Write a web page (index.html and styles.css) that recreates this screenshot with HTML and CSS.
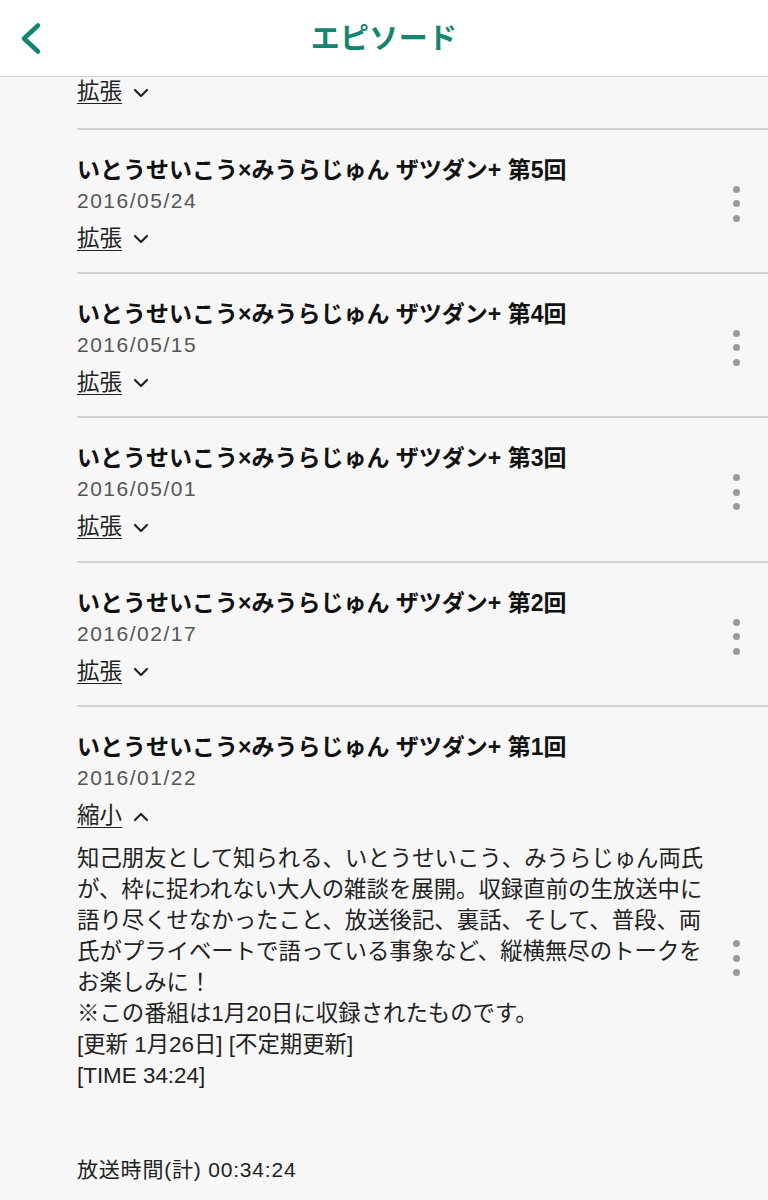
FILE: index.html
```html
<!DOCTYPE html>
<html lang="ja">
<head>
<meta charset="utf-8">
<title>エピソード</title>
<link rel="stylesheet" href="styles.css">
</head>
<body>
<header class="topbar">
  <svg class="back" width="24" height="34" viewBox="0 0 24 34"><path d="M18 3.5 L4 16.5 L18 29.5" fill="none" stroke="#138572" stroke-width="4.5" stroke-linecap="round" stroke-linejoin="round"/></svg>
  <h1 class="title">エピソード</h1>
</header>
<main class="list">
  <section class="item partial">
    <div class="content">
      <div class="toggle"><span class="tlabel">拡張</span><svg class="chev" width="16" height="10" viewBox="0 0 16 10"><path d="M2 2 L8 8 L14 2" fill="none" stroke="#222" stroke-width="2.2" stroke-linecap="round" stroke-linejoin="round"/></svg></div>
    </div>
  </section>
  <section class="item">
    <div class="content">
      <div class="ep-title">いとうせいこう×みうらじゅん ザツダン+ 第5回</div>
      <div class="date">2016/05/24</div>
      <div class="toggle"><span class="tlabel">拡張</span><svg class="chev" width="16" height="10" viewBox="0 0 16 10"><path d="M2 2 L8 8 L14 2" fill="none" stroke="#222" stroke-width="2.2" stroke-linecap="round" stroke-linejoin="round"/></svg></div>
    </div>
    <div class="more"><span></span><span></span><span></span></div>
  </section>
  <section class="item">
    <div class="content">
      <div class="ep-title">いとうせいこう×みうらじゅん ザツダン+ 第4回</div>
      <div class="date">2016/05/15</div>
      <div class="toggle"><span class="tlabel">拡張</span><svg class="chev" width="16" height="10" viewBox="0 0 16 10"><path d="M2 2 L8 8 L14 2" fill="none" stroke="#222" stroke-width="2.2" stroke-linecap="round" stroke-linejoin="round"/></svg></div>
    </div>
    <div class="more"><span></span><span></span><span></span></div>
  </section>
  <section class="item">
    <div class="content">
      <div class="ep-title">いとうせいこう×みうらじゅん ザツダン+ 第3回</div>
      <div class="date">2016/05/01</div>
      <div class="toggle"><span class="tlabel">拡張</span><svg class="chev" width="16" height="10" viewBox="0 0 16 10"><path d="M2 2 L8 8 L14 2" fill="none" stroke="#222" stroke-width="2.2" stroke-linecap="round" stroke-linejoin="round"/></svg></div>
    </div>
    <div class="more"><span></span><span></span><span></span></div>
  </section>
  <section class="item">
    <div class="content">
      <div class="ep-title">いとうせいこう×みうらじゅん ザツダン+ 第2回</div>
      <div class="date">2016/02/17</div>
      <div class="toggle"><span class="tlabel">拡張</span><svg class="chev" width="16" height="10" viewBox="0 0 16 10"><path d="M2 2 L8 8 L14 2" fill="none" stroke="#222" stroke-width="2.2" stroke-linecap="round" stroke-linejoin="round"/></svg></div>
    </div>
    <div class="more"><span></span><span></span><span></span></div>
  </section>
  <section class="item expanded">
    <div class="content">
      <div class="ep-title">いとうせいこう×みうらじゅん ザツダン+ 第1回</div>
      <div class="date">2016/01/22</div>
      <div class="toggle"><span class="tlabel">縮小</span><svg class="chev" width="16" height="10" viewBox="0 0 16 10"><path d="M2 8 L8 2 L14 8" fill="none" stroke="#222" stroke-width="2.2" stroke-linecap="round" stroke-linejoin="round"/></svg></div>
      <p class="desc">知己朋友として知られる、いとうせいこう、みうらじゅん両氏<br>が、枠に捉われない大人の雑談を展開。収録直前の生放送中に<br>語り尽くせなかったこと、放送後記、裏話、そして、普段、両<br>氏がプライベートで語っている事象など、縦横無尽のトークを<br>お楽しみに！<br>※この番組は1月20日に収録されたものです。<br>[更新 1月26日] [不定期更新]<br>[TIME 34:24]</p>
      <div class="total">放送時間(計) 00:34:24</div>
    </div>
    <div class="more"><span></span><span></span><span></span></div>
  </section>
</main>
</body>
</html>
```
FILE: styles.css
```css
html, body {
  margin: 0;
  padding: 0;
}
body {
  background: #f7f7f7;
  font-family: "Liberation Sans", "Noto Sans CJK JP", sans-serif;
  color: #1a1a1a;
  width: 768px;
}
.topbar {
  height: 76px;
  background: #ffffff;
  border-bottom: 1.5px solid #cfcfcf;
  display: flex;
  align-items: center;
  justify-content: center;
  position: relative;
}
.back {
  position: absolute;
  left: 20px;
  top: 22px;
}
.title {
  margin: 0 0 5px;
  font-family: "Noto Sans CJK JP", sans-serif;
  font-size: 29px;
  font-weight: 700;
  line-height: 36px;
  color: #138572;
  letter-spacing: 0.3px;
}
.list {
  margin-left: 77px;
}
.item {
  display: flex;
  align-items: center;
  border-top: 2px solid #d3d3d3;
  padding: 24px 0 18.4px;
}
.item.partial {
  border-top: none;
  padding-top: 0;
  padding-bottom: 20.5px;
}
.content {
  flex: 1;
  min-width: 0;
}
.ep-title {
  font-size: 23px;
  font-weight: 700;
  line-height: 32px;
  color: #111;
  white-space: nowrap;
}
.date {
  font-size: 21px;
  line-height: 30px;
  color: #555;
  letter-spacing: 1.5px;
}
.toggle {
  margin-top: 8px;
  height: 30px;
  display: flex;
  align-items: center;
  gap: 11px;
}
.partial .toggle {
  margin-top: 0;
}
.tlabel {
  font-size: 22.5px;
  line-height: 30px;
  color: #222;
  text-decoration: underline;
  text-decoration-thickness: 1px;
  text-underline-offset: 4px;
}
.chev {
  display: block;
  margin-top: 1px;
}
.desc {
  margin: 11.5px 0 0;
  font-size: 22.4px;
  line-height: 31px;
  color: #222;
  white-space: nowrap;
}
.total {
  margin-top: 64.5px;
  font-size: 21px;
  line-height: 30px;
  color: #222;
  letter-spacing: 0.8px;
}
.expanded {
  padding-bottom: 27px;
}
.more {
  width: 7px;
  margin: 0 28.5px 0 20px;
  display: flex;
  flex-direction: column;
  gap: 7.5px;
}
.more span {
  display: block;
  width: 7px;
  height: 7px;
  border-radius: 50%;
  background: #9a9a9a;
}
```
